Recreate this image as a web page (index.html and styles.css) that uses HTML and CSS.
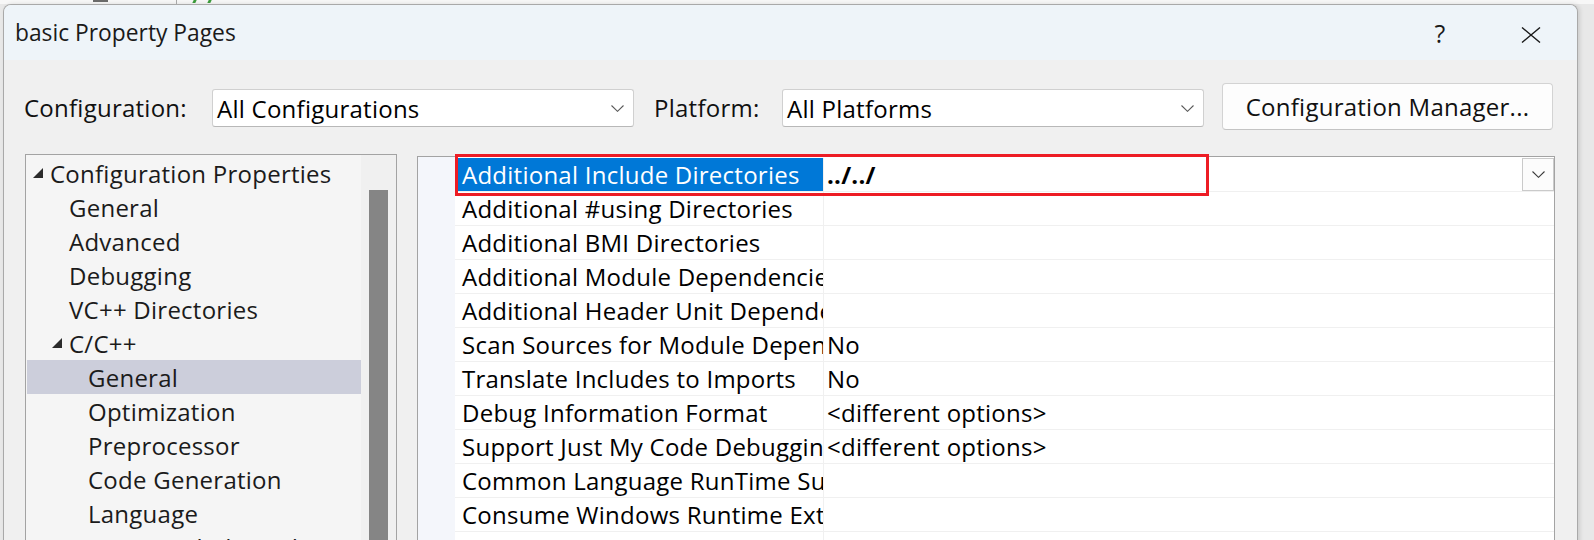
FILE: index.html
```html
<!DOCTYPE html>
<html>
<head>
<meta charset="utf-8">
<title>basic Property Pages</title>
<link rel="stylesheet" href="styles.css">
</head>
<body>
<div class="editor-strip">
  <span class="ed-glyph"></span>
  <span class="ed-line"></span>
  <span class="ed-green"></span>
  <span class="ed-green ed-green2"></span>
</div>
<div class="window">
  <div class="titlebar">
    <div class="title">basic Property Pages</div>
    <div class="help">?</div>
    <div class="close">
      <svg width="20" height="16" viewBox="0 0 20 16"><path d="M1 0.5 L19 15.5 M19 0.5 L1 15.5" stroke="#1a1a1a" stroke-width="1.4" fill="none"/></svg>
    </div>
  </div>
  <div class="content">
    <div class="config-row">
      <div class="config-label">Configuration:</div>
      <div class="combo">
        <span class="combo-text">All Configurations</span>
        <svg class="chev" width="13" height="7" viewBox="0 0 13 7"><path d="M0.5 0.5 L6.5 6.3 L12.5 0.5" stroke="#5a5a5a" stroke-width="1.1" fill="none"/></svg>
      </div>
      <div class="config-label lbl-platform">Platform:</div>
      <div class="combo">
        <span class="combo-text">All Platforms</span>
        <svg class="chev" width="13" height="7" viewBox="0 0 13 7"><path d="M0.5 0.5 L6.5 6.3 L12.5 0.5" stroke="#5a5a5a" stroke-width="1.1" fill="none"/></svg>
      </div>
      <button class="cfg-btn">Configuration Manager...</button>
    </div>
    <div class="main">
      <div class="tree">
        <div class="tree-rows">
          <div class="tree-row lvl0"><svg class="tri" width="10" height="10" viewBox="0 0 10 10"><polygon points="10,0 10,10 0,10" fill="#2b2b2b"/></svg>Configuration Properties</div>
          <div class="tree-row lvl1">General</div>
          <div class="tree-row lvl1">Advanced</div>
          <div class="tree-row lvl1">Debugging</div>
          <div class="tree-row lvl1">VC++ Directories</div>
          <div class="tree-row lvl1x"><svg class="tri" width="10" height="10" viewBox="0 0 10 10"><polygon points="10,0 10,10 0,10" fill="#2b2b2b"/></svg>C/C++</div>
          <div class="tree-row lvl2 selected">General</div>
          <div class="tree-row lvl2">Optimization</div>
          <div class="tree-row lvl2">Preprocessor</div>
          <div class="tree-row lvl2">Code Generation</div>
          <div class="tree-row lvl2">Language</div>
          <div class="tree-row lvl2">Precompiled Headers</div>
        </div>
        <div class="tree-scroll"><div class="thumb"></div></div>
      </div>
      <div class="grid">
        <div class="gutter"></div>
        <div class="grid-rows">
          <div class="prop-row">
            <div class="prop-name sel">Additional Include Directories</div>
            <div class="prop-value"><span class="bold">../../</span>
              <div class="drop"><svg width="13" height="7" viewBox="0 0 13 7"><path d="M0.5 0.5 L6.5 6.3 L12.5 0.5" stroke="#3c3c3c" stroke-width="1.1" fill="none"/></svg></div>
            </div>
          </div>
          <div class="prop-row"><div class="prop-name">Additional #using Directories</div><div class="prop-value"></div></div>
          <div class="prop-row"><div class="prop-name">Additional BMI Directories</div><div class="prop-value"></div></div>
          <div class="prop-row"><div class="prop-name">Additional Module Dependencies</div><div class="prop-value"></div></div>
          <div class="prop-row"><div class="prop-name">Additional Header Unit Dependencies</div><div class="prop-value"></div></div>
          <div class="prop-row"><div class="prop-name">Scan Sources for Module Dependencies</div><div class="prop-value">No</div></div>
          <div class="prop-row"><div class="prop-name">Translate Includes to Imports</div><div class="prop-value">No</div></div>
          <div class="prop-row"><div class="prop-name">Debug Information Format</div><div class="prop-value">&lt;different options&gt;</div></div>
          <div class="prop-row"><div class="prop-name">Support Just My Code Debugging</div><div class="prop-value">&lt;different options&gt;</div></div>
          <div class="prop-row"><div class="prop-name">Common Language RunTime Support</div><div class="prop-value"></div></div>
          <div class="prop-row"><div class="prop-name">Consume Windows Runtime Extension</div><div class="prop-value"></div></div>
          <div class="prop-row"><div class="prop-name">Suppress Startup Banner</div><div class="prop-value">Yes (/nologo)</div></div>
        </div>
        <div class="focus-box"></div>
      </div>
    </div>
  </div>
</div>
</body>
</html>
```
FILE: styles.css
```css
* { box-sizing: border-box; }
html, body { margin: 0; padding: 0; }
body {
  width: 1594px;
  height: 540px;
  overflow: hidden;
  background: #e8e8e8;
  font-family: "Open Sans", "Noto Sans", sans-serif;
  letter-spacing: 0.25px;
  color: #111;
}

/* editor visible behind the dialog */
.editor-strip {
  height: 4px;
  display: flex;
  background: #f7f7f7;
  overflow: hidden;
}
.ed-glyph { margin-left: 93px; width: 15px; height: 2px; background: #6a6a6a; }
.ed-line { margin-left: 68px; width: 1px; height: 4px; background: #a8a8a8; }
.ed-green { margin-left: 16px; width: 3px; height: 3px; background: #3a9a3a; transform: skewX(-25deg); }
.ed-green2 { margin-left: 12px; }

.window {
  margin-left: 3px;
  width: 1575px;
  height: 620px;
  border: 1px solid #a9a9a9;
  border-bottom: none;
  border-radius: 8px 8px 0 0;
  overflow: hidden;
  background: #f0f0f0;
  box-shadow: 2px 0 4px rgba(0, 0, 0, 0.12);
}

.titlebar {
  height: 55px;
  background: #eef4f9;
  display: flex;
  align-items: center;
  padding: 0 24px 0 11px;
}
.title { flex: 1; font-size: 22.8px; letter-spacing: 0; color: #1a1a1a; }
.help { width: 40px; text-align: center; font-size: 25px; color: #1a1a1a; }
.close { width: 44px; margin-left: 49px; margin-top: 4px; display: flex; justify-content: center; }

.config-row {
  display: flex;
  align-items: flex-start;
  height: 70px;
  padding: 23px 0 0 20px;
  font-size: 24px;
}
.config-label { width: 188px; height: 38px; line-height: 38px; margin-top: 6px; color: #111; }
.lbl-platform { width: 128px; margin-left: 20px; }
.combo {
  width: 422px;
  height: 38px;
  margin-top: 6px;
  background: #fff;
  border: 1px solid #d0d0d0;
  border-bottom-color: #b8b8b8;
  border-radius: 3px;
  display: flex;
  align-items: center;
  padding: 0 9px 0 4px;
}
.combo-text { flex: 1; color: #000; }
.cfg-btn {
  margin-left: 18px;
  width: 331px;
  height: 47px;
  background: #fdfdfd;
  border: 1px solid #d3d3d3;
  border-bottom-color: #c4c4c4;
  border-radius: 4px;
  font-family: inherit;
  letter-spacing: inherit;
  font-size: 24px;
  color: #111;
  padding: 0;
}

.main {
  display: flex;
  align-items: flex-start;
  margin-top: 24px;
  padding-left: 21px;
}

.tree {
  width: 372px;
  height: 420px;
  border: 1px solid #a3a3a3;
  border-bottom: none;
  background: #f5f5f5;
  display: flex;
}
.tree-rows { flex: 1; padding: 1px 0 0 1px; }
.tree-row {
  height: 34px;
  display: flex;
  align-items: center;
  font-size: 24px;
  white-space: nowrap;
  color: #1b1b1b;
}
.tree-row.selected { background: #cccedb; }
.tri { margin-right: 7px; margin-top: -1px; flex: none; }
.lvl0 { padding-left: 6px; }
.lvl1 { padding-left: 42px; }
.lvl1x { padding-left: 25px; }
.lvl2 { padding-left: 61px; }
.tree-scroll { width: 35px; background: #f0f0f0; padding: 35px 0 0 8px; }
.thumb { width: 19px; height: 400px; background: #858585; }

.grid {
  position: relative;
  width: 1138px;
  height: 420px;
  margin: 2px 0 0 20px;
  border: 1px solid #a3a3a3;
  border-bottom: none;
  background: #fff;
  display: flex;
}
.gutter { width: 37px; background: #f4f6fb; }
.grid-rows { flex: 1; padding-top: 1px; }
.prop-row {
  display: flex;
  height: 34px;
  border-bottom: 1px solid #f0f0f0;
  font-size: 24px;
  color: #000;
}
.prop-name {
  width: 369px;
  border-right: 1px solid #f0f0f0;
  padding-left: 7px;
  line-height: 33px;
  overflow: hidden;
  white-space: nowrap;
}
.prop-name.sel { background: #0078d7; color: #fff; }
.prop-value {
  flex: 1;
  display: flex;
  align-items: center;
  padding-left: 3px;
  white-space: nowrap;
}
.bold { font-weight: 700; }
.drop {
  margin-left: auto;
  width: 32px;
  height: 33px;
  background: #fcfcfc;
  border: 1px solid #cacaca;
  display: flex;
  align-items: center;
  justify-content: center;
}

/* annotation box drawn over the first row */
.focus-box {
  position: absolute;
  left: 37px;
  top: -3px;
  width: 754px;
  height: 42px;
  border: 3px solid #ed1c24;
}
```
